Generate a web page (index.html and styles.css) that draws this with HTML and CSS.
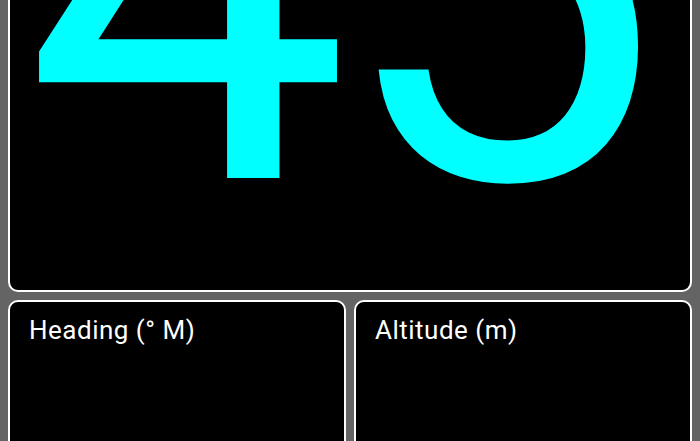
FILE: index.html
```html
<!DOCTYPE html>
<html lang="en">
<head>
<meta charset="utf-8">
<title>Flight Display</title>
<link rel="stylesheet" href="styles.css">
</head>
<body>
<main class="dash">
  <section class="card card-primary">
    <span class="readout">45</span>
  </section>
  <section class="card">
    <h2 class="card-label">Heading (° M)</h2>
  </section>
  <section class="card">
    <h2 class="card-label">Altitude (m)</h2>
  </section>
</main>
</body>
</html>
```
FILE: styles.css
```css
html, body {
  margin: 0;
  height: 100%;
  overflow: hidden;
}

body {
  background: #646464;
  font-family: Roboto, "Noto Sans", sans-serif;
  color: #ffffff;
}

.dash {
  display: grid;
  grid-template-columns: 1fr 1fr;
  grid-template-rows: 312px 220px;
  gap: 8px;
  padding: 0 8px;
  margin-top: -20px;
}

.card {
  background: #000000;
  border: 2px solid #ffffff;
  border-radius: 10px;
  overflow: hidden;
}

.card-primary {
  grid-column: 1 / -1;
  display: flex;
  justify-content: center;
  align-items: flex-end;
  padding: 0 30px 20px 0;
}

.readout {
  font-size: 580px;
  line-height: 1;
  letter-spacing: -15px;
  color: #00ffff;
  white-space: nowrap;
}

.card-label {
  margin: 0;
  padding: 13px 19px;
  font-size: 26px;
  font-weight: 400;
  line-height: 30px;
  letter-spacing: 0.5px;
}
```
